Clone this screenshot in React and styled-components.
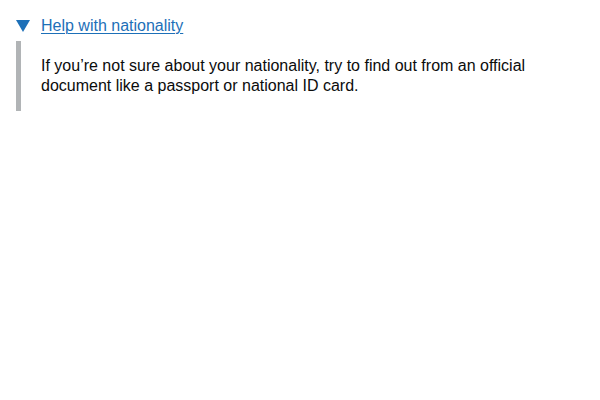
import React from 'react';
import styled, {createGlobalStyle} from 'styled-components';


const GlobalStl = createGlobalStyle`
  body {
    margin: 0;
    background: #ffffff;
    font-family: "Liberation Sans", Arial, sans-serif;
  }
`


const PageStl = styled.div`
  padding: 16px;
`


const DetailsStl = styled.details`
  font-size: 16px;
  line-height: 20px;
  color: #0b0c0c;
`


const SummaryStl = styled.summary`
  display: inline-block;
  position: relative;
  margin-bottom: 5px;
  padding-left: 25px;
  color: #1d70b8;
  cursor: pointer;
  list-style: none;

  &::-webkit-details-marker {
    display: none;
  }

  &::before {
    content: "";
    position: absolute;
    top: 4px;
    left: 0;
    width: 0;
    height: 0;
    border-style: solid;
    border-color: transparent;
    border-width: 12.124px 7px 0 7px;
    border-top-color: #1d70b8;
  }
`


const SummaryTextStl = styled.span`
  text-decoration: underline;
  text-decoration-thickness: 1px;
  text-underline-offset: 2px;
`


const TextStl = styled.div`
  padding: 15px 15px 15px 20px;
  border-left: 5px solid #b1b4b6;
`


export default function App() {
  return (
    <PageStl>
      <GlobalStl/>
      <DetailsStl open>
        <SummaryStl>
          <SummaryTextStl>Help with nationality</SummaryTextStl>
        </SummaryStl>
        <TextStl>
          If you’re not sure about your nationality, try to find out from an official document like a passport or national ID card.
        </TextStl>
      </DetailsStl>
    </PageStl>
  )
}
